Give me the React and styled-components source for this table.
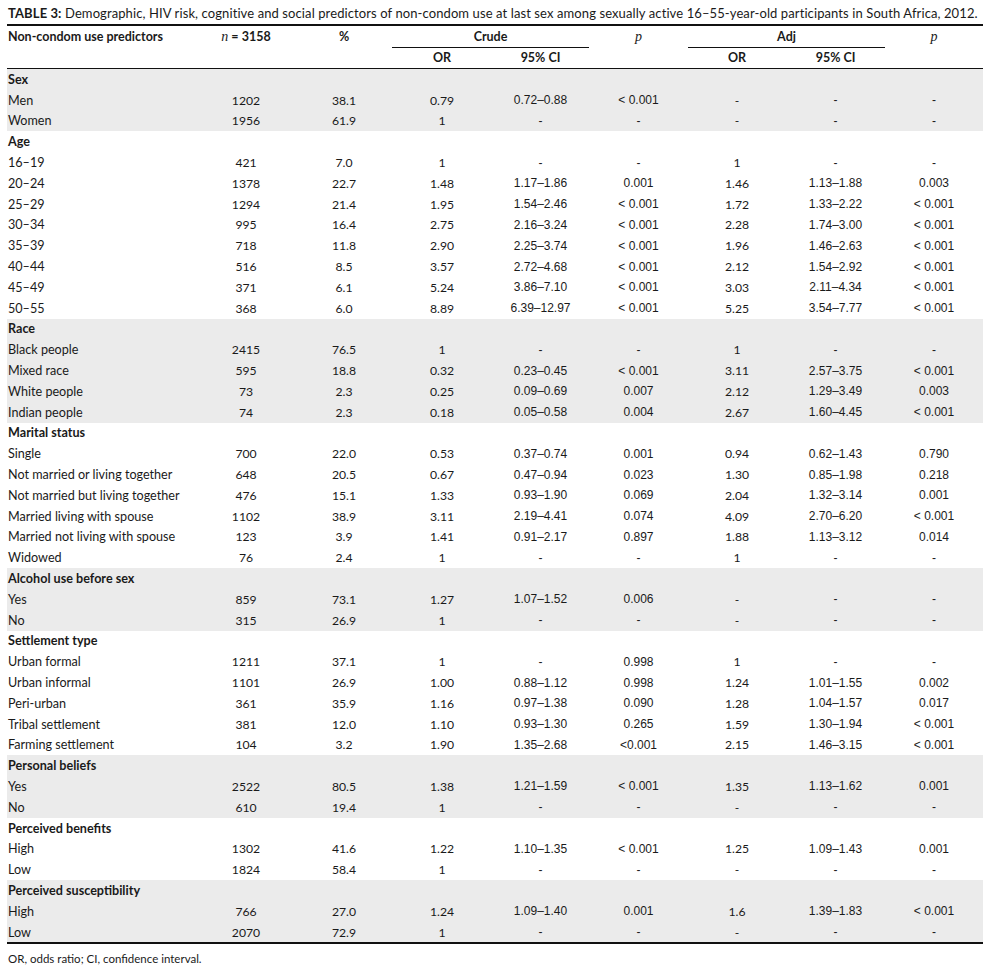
import React from 'react';
import styled, { createGlobalStyle } from 'styled-components';

const Global = createGlobalStyle`
  html, body { margin: 0; padding: 0; background: #fff; }
  body { font-family: Lato, "Liberation Sans", sans-serif; color: #1a1a1a; }
`;

const Page = styled.div`
  width: 976px;
  padding-left: 7px;
`;

const Title = styled.div`
  font-family: Lato, sans-serif;
  font-size: 13px;
  letter-spacing: 0.1px;
  line-height: 15px;
  padding: 5.5px 0 3px 1px;
  border-bottom: 2.5px solid #111;
  white-space: nowrap;
  b { font-weight: 700; }
`;

const Table = styled.table`
  width: 976px;
  table-layout: fixed;
  border-collapse: separate;
  border-spacing: 0;
  border-bottom: 2.5px solid #111;
`;

const Th = styled.th`
  font-family: Lato, sans-serif;
  font-weight: 700;
  font-size: 12.5px;
  padding: 0 1px;
  text-align: ${(p) => (p.$left ? 'left' : 'center')};
  vertical-align: middle;
  height: ${(p) => p.$h || 21}px;
  box-sizing: border-box;
  border-bottom: ${(p) => (p.$rule ? '1px solid #111' : 'none')};
`;

const Ital = styled.span`
  font-family: "Liberation Serif", serif;
  font-style: italic;
  font-weight: 400;
  font-size: 14px;
`;

const Tr = styled.tr`
  background: ${(p) => (p.$shaded ? '#ebebeb' : 'transparent')};
`;

const Td = styled.td`
  height: 20.8px;
  padding: 0 1px;
  box-sizing: border-box;
  white-space: nowrap;
  vertical-align: middle;
  text-align: ${(p) => (p.$kind === 'label' || p.$kind === 'group' ? 'left' : 'center')};
  font-family: ${(p) => (p.$kind === 'arial' ? '"Liberation Sans", Arial, sans-serif' : 'Lato, sans-serif')};
  font-size: ${(p) => (p.$kind === 'arial' ? '12px' : p.$kind === 'num' ? '12.2px' : '12.6px')};
  font-weight: ${(p) => (p.$kind === 'group' ? 700 : 400)};
`;

const Note = styled.div`
  font-family: Lato, sans-serif;
  font-size: 11.5px;
  line-height: 16px;
  padding: 6.5px 0 0 1px;
`;

const groups = [
  { title: 'Sex', shaded: true, rows: [
    ['Men', '1202', '38.1', '0.79', '0.72–0.88', '< 0.001', '-', '-', '-'],
    ['Women', '1956', '61.9', '1', '-', '-', '-', '-', '-'],
  ] },
  { title: 'Age', rows: [
    ['16–19', '421', '7.0', '1', '-', '-', '1', '-', '-'],
    ['20–24', '1378', '22.7', '1.48', '1.17–1.86', '0.001', '1.46', '1.13–1.88', '0.003'],
    ['25–29', '1294', '21.4', '1.95', '1.54–2.46', '< 0.001', '1.72', '1.33–2.22', '< 0.001'],
    ['30–34', '995', '16.4', '2.75', '2.16–3.24', '< 0.001', '2.28', '1.74–3.00', '< 0.001'],
    ['35–39', '718', '11.8', '2.90', '2.25–3.74', '< 0.001', '1.96', '1.46–2.63', '< 0.001'],
    ['40–44', '516', '8.5', '3.57', '2.72–4.68', '< 0.001', '2.12', '1.54–2.92', '< 0.001'],
    ['45–49', '371', '6.1', '5.24', '3.86–7.10', '< 0.001', '3.03', '2.11–4.34', '< 0.001'],
    ['50–55', '368', '6.0', '8.89', '6.39–12.97', '< 0.001', '5.25', '3.54–7.77', '< 0.001'],
  ] },
  { title: 'Race', shaded: true, rows: [
    ['Black people', '2415', '76.5', '1', '-', '-', '1', '-', '-'],
    ['Mixed race', '595', '18.8', '0.32', '0.23–0.45', '< 0.001', '3.11', '2.57–3.75', '< 0.001'],
    ['White people', '73', '2.3', '0.25', '0.09–0.69', '0.007', '2.12', '1.29–3.49', '0.003'],
    ['Indian people', '74', '2.3', '0.18', '0.05–0.58', '0.004', '2.67', '1.60–4.45', '< 0.001'],
  ] },
  { title: 'Marital status', rows: [
    ['Single', '700', '22.0', '0.53', '0.37–0.74', '0.001', '0.94', '0.62–1.43', '0.790'],
    ['Not married or living together', '648', '20.5', '0.67', '0.47–0.94', '0.023', '1.30', '0.85–1.98', '0.218'],
    ['Not married but living together', '476', '15.1', '1.33', '0.93–1.90', '0.069', '2.04', '1.32–3.14', '0.001'],
    ['Married living with spouse', '1102', '38.9', '3.11', '2.19–4.41', '0.074', '4.09', '2.70–6.20', '< 0.001'],
    ['Married not living with spouse', '123', '3.9', '1.41', '0.91–2.17', '0.897', '1.88', '1.13–3.12', '0.014'],
    ['Widowed', '76', '2.4', '1', '-', '-', '1', '-', '-'],
  ] },
  { title: 'Alcohol use before sex', shaded: true, rows: [
    ['Yes', '859', '73.1', '1.27', '1.07–1.52', '0.006', '-', '-', '-'],
    ['No', '315', '26.9', '1', '-', '-', '-', '-', '-'],
  ] },
  { title: 'Settlement type', rows: [
    ['Urban formal', '1211', '37.1', '1', '-', '0.998', '1', '-', '-'],
    ['Urban informal', '1101', '26.9', '1.00', '0.88–1.12', '0.998', '1.24', '1.01–1.55', '0.002'],
    ['Peri-urban', '361', '35.9', '1.16', '0.97–1.38', '0.090', '1.28', '1.04–1.57', '0.017'],
    ['Tribal settlement', '381', '12.0', '1.10', '0.93–1.30', '0.265', '1.59', '1.30–1.94', '< 0.001'],
    ['Farming settlement', '104', '3.2', '1.90', '1.35–2.68', '<0.001', '2.15', '1.46–3.15', '< 0.001'],
  ] },
  { title: 'Personal beliefs', shaded: true, rows: [
    ['Yes', '2522', '80.5', '1.38', '1.21–1.59', '< 0.001', '1.35', '1.13–1.62', '0.001'],
    ['No', '610', '19.4', '1', '-', '-', '-', '-', '-'],
  ] },
  { title: 'Perceived benefits', rows: [
    ['High', '1302', '41.6', '1.22', '1.10–1.35', '< 0.001', '1.25', '1.09–1.43', '0.001'],
    ['Low', '1824', '58.4', '1', '-', '-', '-', '-', '-'],
  ] },
  { title: 'Perceived susceptibility', shaded: true, rows: [
    ['High', '766', '27.0', '1.24', '1.09–1.40', '0.001', '1.6', '1.39–1.83', '< 0.001'],
    ['Low', '2070', '72.9', '1', '-', '-', '-', '-', '-'],
  ] },
];

const kinds = ['label', 'num', 'num', 'num', 'arial', 'arial', 'num', 'arial', 'arial'];
const widths = [189, 100, 96, 100, 97, 99, 98, 99, 98];

export default function App() {
  return (
    <Page>
      <Global />
      <Title>
        <b>TABLE 3:</b> Demographic, HIV risk, cognitive and social predictors of non-condom use at last sex among sexually active 16–55-year-old participants in South Africa, 2012.
      </Title>
      <Table>
        <colgroup>
          {widths.map((w, i) => <col key={i} style={{ width: w }} />)}
        </colgroup>
        <thead>
          <tr>
            <Th $left $h={22}>Non-condom use predictors</Th>
            <Th $h={22}><Ital>n</Ital> = 3158</Th>
            <Th $h={22}>%</Th>
            <Th colSpan={2} $rule $h={22}>Crude</Th>
            <Th $h={22}><Ital>p</Ital></Th>
            <Th colSpan={2} $rule $h={22}>Adj</Th>
            <Th $h={22}><Ital>p</Ital></Th>
          </tr>
          <tr>
            <Th $rule $h={21.5} />
            <Th $rule $h={21.5} />
            <Th $rule $h={21.5} />
            <Th $rule $h={21.5}>OR</Th>
            <Th $rule $h={21.5}>95% CI</Th>
            <Th $rule $h={21.5} />
            <Th $rule $h={21.5}>OR</Th>
            <Th $rule $h={21.5}>95% CI</Th>
            <Th $rule $h={21.5} />
          </tr>
        </thead>
        <tbody>
          {groups.map((g) => (
            <React.Fragment key={g.title}>
              <Tr $shaded={g.shaded}>
                <Td $kind="group" colSpan={9}>{g.title}</Td>
              </Tr>
              {g.rows.map((r, ri) => (
                <Tr key={ri} $shaded={g.shaded}>
                  {r.map((c, ci) => (
                    <Td key={ci} $kind={kinds[ci]}>{c}</Td>
                  ))}
                </Tr>
              ))}
            </React.Fragment>
          ))}
        </tbody>
      </Table>
      <Note>OR, odds ratio; CI, confidence interval.</Note>
    </Page>
  );
}
